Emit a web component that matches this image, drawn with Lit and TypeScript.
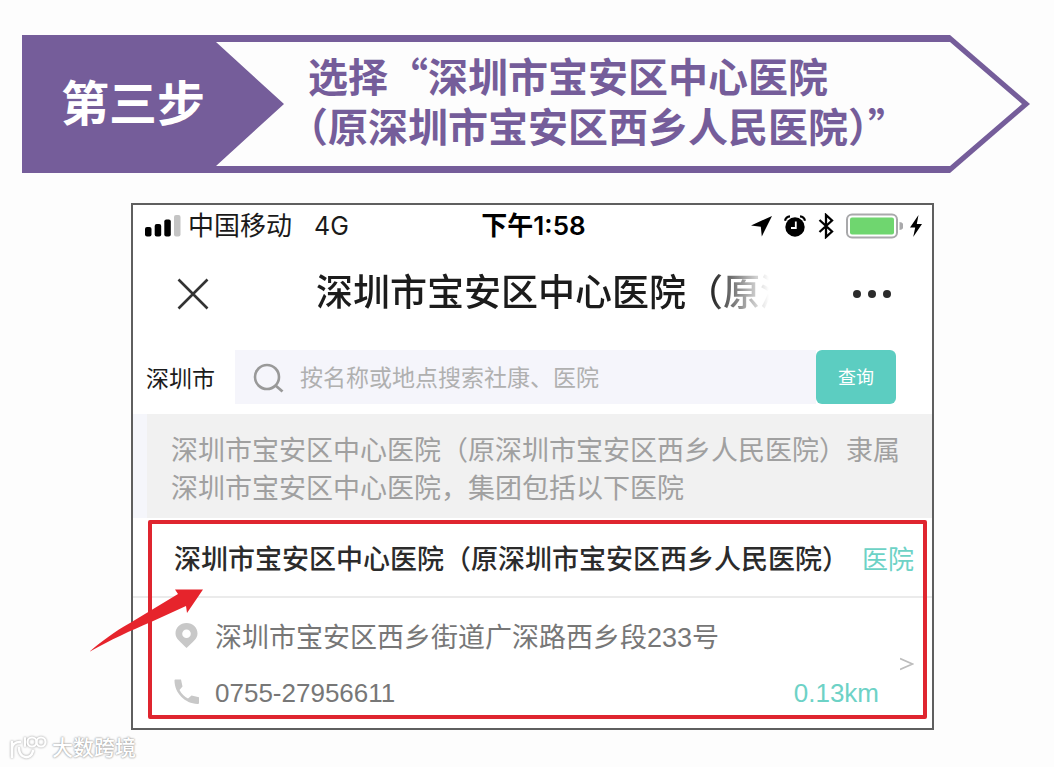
import { LitElement, html, css } from "lit";
import { customElement } from "lit/decorators.js";

const font = css`"Liberation Sans", "Noto Sans CJK SC", sans-serif`;

@customElement("step-banner")
class StepBanner extends LitElement {
  static styles = css`
    :host { display: block; }
    .banner {
      display: flex;
      height: 138px;
      box-sizing: border-box;
      padding: 7px 8px 7px 0;
      background: #755d9a;
      color: #755d9a;
      font-family: "Noto Sans CJK SC", sans-serif;
      font-weight: 700;
      clip-path: polygon(0 0, calc(100% - 80px) 0, 100% 50%, calc(100% - 80px) 100%, 0 100%);
    }
    .step {
      flex: none;
      width: 194px;
      box-sizing: border-box;
      padding: 0 0 8px 39px;
      display: flex;
      align-items: center;
      color: #fff;
      font-size: 48px;
      line-height: 60px;
      white-space: nowrap;
    }
    .panel {
      flex: 1;
      display: flex;
      align-items: center;
      padding: 0 0 8px 92px;
      background: #fdfdfd;
      clip-path: polygon(0 0, calc(100% - 72px) 0, 100% 50%, calc(100% - 72px) 100%, 0 100%, 68px 50%);
    }
    h1 { margin: 0; font-size: 40px; line-height: 50px; font-weight: 700; white-space: nowrap; }
    .line { display: block; }
    .half { font-feature-settings: "halt"; }
  `;
  render() {
    return html`<header class="banner">
      <div class="step">第三步</div>
      <div class="panel">
        <h1><span class="line">选择“深圳市宝安区中心医院</span><span class="line half">（原深圳市宝安区西乡人民医院）”</span></h1>
      </div>
    </header>`;
  }
}

@customElement("status-bar")
class StatusBar extends LitElement {
  static styles = css`
    :host { display: block; }
    .bar {
      display: grid;
      grid-template-columns: 1fr auto 1fr;
      align-items: center;
      height: 42px;
      padding: 0 10px 0 12px;
      font-family: Inter, "Noto Sans CJK SC", sans-serif;
      font-size: 26px;
      line-height: 32px;
      color: #1a1a1a;
      white-space: nowrap;
    }
    .left, .right { display: flex; align-items: center; }
    .right { justify-content: flex-end; }
    .signal { margin-right: 7px; }
    .net { margin-left: 22px; font-size: 25px; }
    .time { font-weight: 600; color: #000; }
    svg { display: block; }
    .nav, .alarm, .bt { margin-right: 12px; }
    .battery { margin-right: 7px; }
  `;
  render() {
    return html`<div class="bar">
      <div class="left">
        <svg class="signal" width="36" height="22" viewBox="0 0 36 22">
          <rect x="0" y="12" width="6.500" height="9.500" rx="2" fill="#000"/>
          <rect x="9.700" y="9" width="6.500" height="12.500" rx="2" fill="#000"/>
          <rect x="19.300" y="4.500" width="6.500" height="17" rx="2" fill="#000"/>
          <rect x="29" y="0" width="6.500" height="21.500" rx="2" fill="#c4c4c4"/>
        </svg>
        <span>中国移动</span><span class="net">4G</span>
      </div>
      <span class="time">下午1:58</span>
      <div class="right">
        <svg class="nav" width="21" height="21" viewBox="0 0 21 21"><path d="M21 0 10.800 20.500 9.800 10.800 0 9.500Z" fill="#000"/></svg>
        <svg class="alarm" width="22" height="22" viewBox="0 0 22 22">
          <circle cx="11" cy="12" r="9.700" fill="#000"/>
          <path d="M1 5.800A5.500 5.500 0 0 1 6 1.300M21 5.800A5.500 5.500 0 0 0 16 1.300" fill="none" stroke="#000" stroke-width="2.200"/>
          <path d="M11.800 6.500V13H7" fill="none" stroke="#fff" stroke-width="1.800"/>
        </svg>
        <svg class="bt" width="16" height="26" viewBox="0 0 16 26"><path d="M1.500 7 14 18.500 8 24V2L14 7.500 1.500 19" fill="none" stroke="#000" stroke-width="2.300"/></svg>
        <svg class="battery" width="57" height="26" viewBox="0 0 57 26">
          <rect x="1" y="1.500" width="50" height="23" rx="5" fill="#fff" stroke="#a9a9ab" stroke-width="2"/>
          <rect x="4" y="4.500" width="44" height="17" rx="2" fill="#6fd66f"/>
          <path d="M53.500 9a4 4 0 0 1 0 8Z" fill="#a9a9ab"/>
        </svg>
        <svg width="12" height="22" viewBox="0 0 12 22"><path d="M8.500 0 0 12.500H5.200L3.200 22 12 9H6.800Z" fill="#000"/></svg>
      </div>
    </div>`;
  }
}

@customElement("hospital-card")
class HospitalCard extends LitElement {
  static styles = css`
    :host { display: block; position: relative; font-family: ${font}; }
    .frame {
      position: absolute;
      inset: 2px 5px 9px 15px;
      border: 4px solid #df252f;
      border-radius: 2px;
      pointer-events: none;
    }
    .pointer { position: absolute; left: -43px; top: 69px; }
    .head {
      display: flex;
      align-items: center;
      justify-content: space-between;
      height: 72px;
      padding: 6px 18px 0 41px;
      border-bottom: 2px solid #ebebeb;
      white-space: nowrap;
    }
    h3 { margin: 0; font-size: 27px; line-height: 40px; font-weight: 500; color: #2b2b2b; }
    .tag { font-size: 26px; line-height: 40px; color: #6dd2c6; }
    .body { display: flex; align-items: center; padding: 8px 18px 6px 41px; }
    .lines { flex: 1; }
    .row { display: flex; align-items: center; height: 58px; font-size: 27px; color: #777; white-space: nowrap; }
    .row svg { flex: none; margin-right: 15px; }
    .phone { font-size: 26px; color: #777; text-decoration: none; }
    .distance { margin-left: auto; font-size: 26px; color: #6dd2c6; }
    .go { margin-left: 21px; padding: 0; border: 0; background: none; color: #bdbdbd; }
    .go svg { display: block; }
  `;
  render() {
    return html`
      <article>
        <div class="head"><h3>深圳市宝安区中心医院（原深圳市宝安区西乡人民医院）</h3><span class="tag">医院</span></div>
        <div class="body">
          <div class="lines">
            <div class="row">
              <svg width="26" height="27" viewBox="0 0 26 27"><path fill-rule="evenodd" d="M12.500 1C6.300 1 1.500 5.500 1.500 11.500 1.500 17 7 20 12.500 26c6-6 11-9 11-14.500C23.500 5.500 18.700 1 12.500 1Zm0 6.500a4.300 4.300 0 1 1 0 8.600 4.300 4.300 0 0 1 0-8.600Z" fill="#c8c8c8"/></svg>
              <span>深圳市宝安区西乡街道广深路西乡段233号</span>
            </div>
            <div class="row">
              <svg width="26" height="28" viewBox="0 0 26 28"><path d="M.5 1.500C.5 .8 1 .5 1.500 .5H7L8.500 7.500 5.500 11C7.500 15 10.500 17.800 14 19.500L17.500 16.500 25 18.200V23.500C25 24.500 24.500 25 23.500 25 11 24.500 .5 14 .5 1.500Z" fill="#c8c8c8"/></svg>
              <a class="phone" href="tel:0755-27956611">0755-27956611</a>
              <span class="distance">0.13km</span>
            </div>
          </div>
          <button class="go" aria-label="查看详情"><svg width="14" height="14" viewBox="0 0 14 14"><path d="M0 1.500 12.500 7 0 12.500" fill="none" stroke="currentColor" stroke-width="1.800"/></svg></button>
        </div>
      </article>
      <div class="frame"></div>
      <svg class="pointer" width="116" height="66" viewBox="0 0 116 66"><path d="M-1 65C12 54 24 45 40 36L88 7 85 2.500 113 2.500 97 26 96 19 61 35C40 44 20 53 -1 65Z" fill="#e6242c"/></svg>
    `;
  }
}

@customElement("app-root")
class AppRoot extends LitElement {
  static styles = css`
    :host { display: block; min-height: 100vh; background: #fdfdfd; font-family: ${font}; }
    .page { box-sizing: border-box; padding: 35px 24px 0 22px; }
    .phone { margin: 30px 96px 0 109px; border: 2px solid #5f5f5f; background: #fff; }
    .nav { display: flex; align-items: center; height: 86px; padding: 4px 40px 0 43px; }
    .icon { flex: none; border: 0; padding: 0; background: none; }
    .icon svg { display: block; }
    h2 {
      flex: 1;
      min-width: 0;
      margin: 0 83px 0 106px;
      overflow: hidden;
      white-space: nowrap;
      font-size: 37px;
      line-height: 54px;
      font-weight: 500;
      color: #1c1c1c;
      mask-image: linear-gradient(to right, #000 calc(100% - 60px), transparent);
    }
    .search { display: flex; align-items: center; height: 54px; padding: 13px 36px 10px 13px; }
    .city { flex: none; width: 89px; font-size: 23px; color: #1c1c1c; }
    .box { flex: 1; display: flex; align-items: center; height: 54px; padding-left: 18px; background: #f5f5fb; }
    input { flex: 1; min-width: 0; margin-left: 16px; padding: 2px 0 0; border: 0; outline: 0; background: none; font: 23px/34px ${font}; }
    input::placeholder { color: #b0b0b0; opacity: 1; }
    .go { flex: none; width: 80px; height: 54px; padding: 2px 0 0; border: 0; border-radius: 6px; background: #5ccdc1; color: #fff; font: 18px/26px ${font}; }
    .note { margin: 0; padding: 18px 24px 10px 24px; border-left: 14px solid #f5f6fb; background: #f1f1f1; color: #a0a0a0; font-size: 27px; line-height: 38px; }
    .mark { display: flex; align-items: center; gap: 4px; margin: 2px 0 0 -14px; font-size: 21px; line-height: 32px; font-weight: 500; color: #fff; text-shadow: 0 0 2px #999, 0 0 2px #aaa; }
    .mark svg { filter: drop-shadow(0 0 1px #999); }
  `;
  render() {
    return html`<main class="page">
      <step-banner></step-banner>
      <section class="phone">
        <status-bar></status-bar>
        <div class="nav">
          <button class="icon" aria-label="关闭"><svg width="34" height="34" viewBox="0 0 34 34"><path d="M2.500 2.500 31.500 31.500M31.500 2.500 2.500 31.500" stroke="#333" stroke-width="2.600"/></svg></button>
          <h2>深圳市宝安区中心医院（原深</h2>
          <button class="icon" aria-label="更多"><svg width="40" height="10" viewBox="0 0 40 10"><g fill="#2b2b2b"><circle cx="5" cy="5" r="4"/><circle cx="20" cy="5" r="4"/><circle cx="35" cy="5" r="4"/></g></svg></button>
        </div>
        <form class="search">
          <label class="city" for="q">深圳市</label>
          <div class="box">
            <svg width="31" height="31" viewBox="0 0 31 31"><circle cx="14" cy="15" r="12" fill="none" stroke="#999" stroke-width="2.600"/><path d="M22.500 23.500 29.500 29.500" stroke="#999" stroke-width="2.800"/></svg>
            <input id="q" type="text" placeholder="按名称或地点搜索社康、医院">
          </div>
          <button class="go" type="button">查询</button>
        </form>
        <p class="note">深圳市宝安区中心医院（原深圳市宝安区西乡人民医院）隶属深圳市宝安区中心医院，集团包括以下医院</p>
        <hospital-card></hospital-card>
      </section>
      <footer class="mark">
        <svg width="40" height="30" viewBox="0 0 40 30"><g fill="none" stroke="#fff" stroke-width="2.600" stroke-linecap="round"><path d="M4 9V24M4 16C4 12 7 9 12 9M11 15C11 26 23 27 25 18"/><path d="M17 5V13" stroke-width="2.200"/><circle cx="24" cy="9" r="4.500" stroke-width="2.200"/><circle cx="33" cy="9" r="4.500" stroke-width="2.200"/></g></svg>
        <span>大数跨境</span>
      </footer>
    </main>`;
  }
}
